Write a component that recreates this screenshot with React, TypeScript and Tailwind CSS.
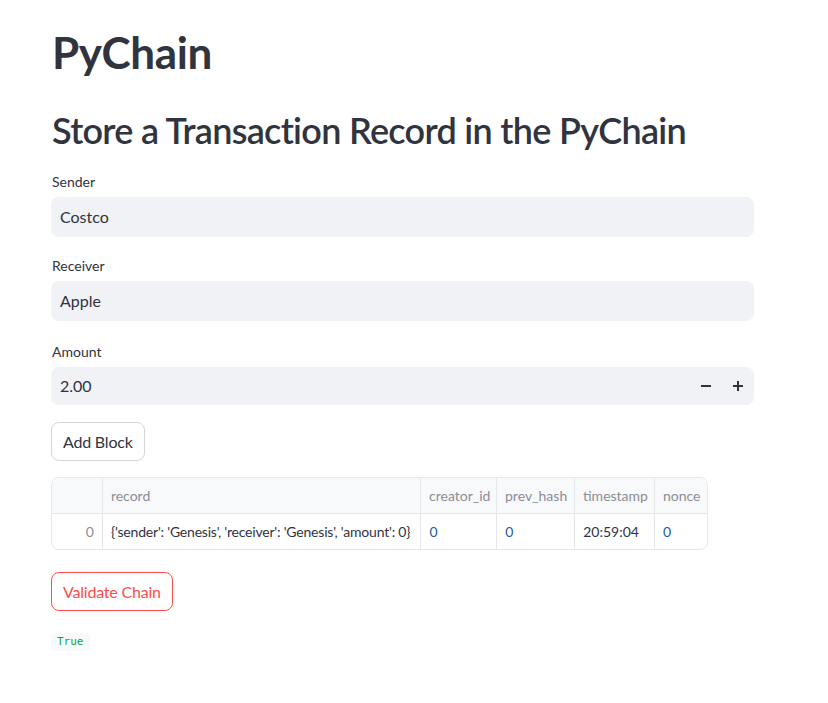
import React from "react";

const font = { fontFamily: "Lato, 'Noto Sans', sans-serif" };

function Label({ children }: { children: React.ReactNode }) {
  return <div className="text-[14px] leading-[20px] text-[#31333f] h-[20px] mb-[5px] pl-[1px]">{children}</div>;
}

function TextInput({ value }: { value: string }) {
  return (
    <div className="h-[40px] w-full rounded-[8px] bg-[#f0f2f6] flex items-center px-[9px] text-[16px] text-[#31333f]">
      {value}
    </div>
  );
}

export default function App() {
  const cols = [
    { name: "", w: "w-[51px]" },
    { name: "record", w: "w-[319px]" },
    { name: "creator_id", w: "w-[76px]" },
    { name: "prev_hash", w: "w-[78px]" },
    { name: "timestamp", w: "w-[80px]" },
    { name: "nonce", w: "w-[52px]" },
  ];
  return (
    <div className="min-h-[703px] bg-white text-[#31333f]" style={font}>
      <div className="pl-[51px] w-[754px] pt-[24px] flex flex-col">
        <h1 className="pl-[1px] text-[44px] leading-[56px] font-bold text-[#31333f] h-[56px] tracking-[-0.4px]">PyChain</h1>
        <h2 className="pl-[1px] mt-[28px] text-[36px] leading-[44px] font-semibold text-[#31333f] h-[44px] tracking-[-0.7px]">
          Store a Transaction Record in the PyChain
        </h2>
        <div className="mt-[20px]">
          <Label>Sender</Label>
          <TextInput value="Costco" />
        </div>
        <div className="mt-[19px]">
          <Label>Receiver</Label>
          <TextInput value="Apple" />
        </div>
        <div className="mt-[21px]">
          <Label>Amount</Label>
          <div className="h-[38px] w-full rounded-[8px] bg-[#f0f2f6] flex items-center pl-[9px] text-[16px] text-[#31333f]">
            <span className="flex-1">2.00</span>
            <button className="w-[32px] h-[38px] flex items-center justify-center">
              <svg width="10" height="10" viewBox="0 0 10 10"><rect x="0" y="4" width="10" height="2" fill="#31333f" /></svg>
            </button>
            <button className="w-[32px] h-[38px] flex items-center justify-center">
              <svg width="10" height="10" viewBox="0 0 10 10"><rect x="0" y="4" width="10" height="2" fill="#31333f" /><rect x="4" y="0" width="2" height="10" fill="#31333f" /></svg>
            </button>
          </div>
        </div>
        <div className="mt-[17px]">
          <button className="h-[39px] px-[11px] rounded-[8px] border border-[#d6d6d9] bg-white text-[16px] text-[#31333f] tracking-[-0.2px]">
            Add Block
          </button>
        </div>
        <div className="mt-[16px] w-[657px] rounded-[8px] border border-[#e6e7ea] overflow-hidden text-[14px]">
          <div className="flex h-[36px] bg-[#f8f9fb] border-b border-[#e6e7ea]">
            {cols.map((c, i) => (
              <div key={i} className={`${c.w} flex items-center px-[8px] text-[#8b8d97] ${i < cols.length - 1 ? "border-r border-[#e6e7ea]" : ""}`}>
                {c.name}
              </div>
            ))}
          </div>
          <div className="flex h-[35px]">
            <div className="w-[51px] flex items-center justify-end px-[8px] text-[#8b8d97] border-r border-[#e6e7ea]">0</div>
            <div className="w-[319px] flex items-center px-[8px] text-[#31333f] border-r border-[#e6e7ea] whitespace-nowrap overflow-hidden tracking-[-0.2px]">
              {"{'sender': 'Genesis', 'receiver': 'Genesis', 'amount': 0}"}
            </div>
            <div className="w-[76px] flex items-center px-[8px] text-[#1c5aa6] border-r border-[#e6e7ea]">0</div>
            <div className="w-[78px] flex items-center px-[8px] text-[#1c5aa6] border-r border-[#e6e7ea]">0</div>
            <div className="w-[80px] flex items-center px-[8px] text-[#31333f] border-r border-[#e6e7ea]">20:59:04</div>
            <div className="w-[52px] flex items-center px-[8px] text-[#1c5aa6]">0</div>
          </div>
        </div>
        <div className="mt-[22px]">
          <button className="h-[39px] px-[11px] rounded-[8px] border border-[#ff4b4b] bg-white text-[16px] text-[#ff4b4b] tracking-[-0.2px]">
            Validate Chain
          </button>
        </div>
        <div className="mt-[16px]">
          <span
            className="inline-flex items-center h-[18px] px-[6px] rounded-[4px] bg-[#f8f9fb] text-[11px] text-[#09ab3b]"
            style={{ fontFamily: "'DejaVu Sans Mono', 'Liberation Mono', monospace" }}
          >
            True
          </span>
        </div>
      </div>
    </div>
  );
}
